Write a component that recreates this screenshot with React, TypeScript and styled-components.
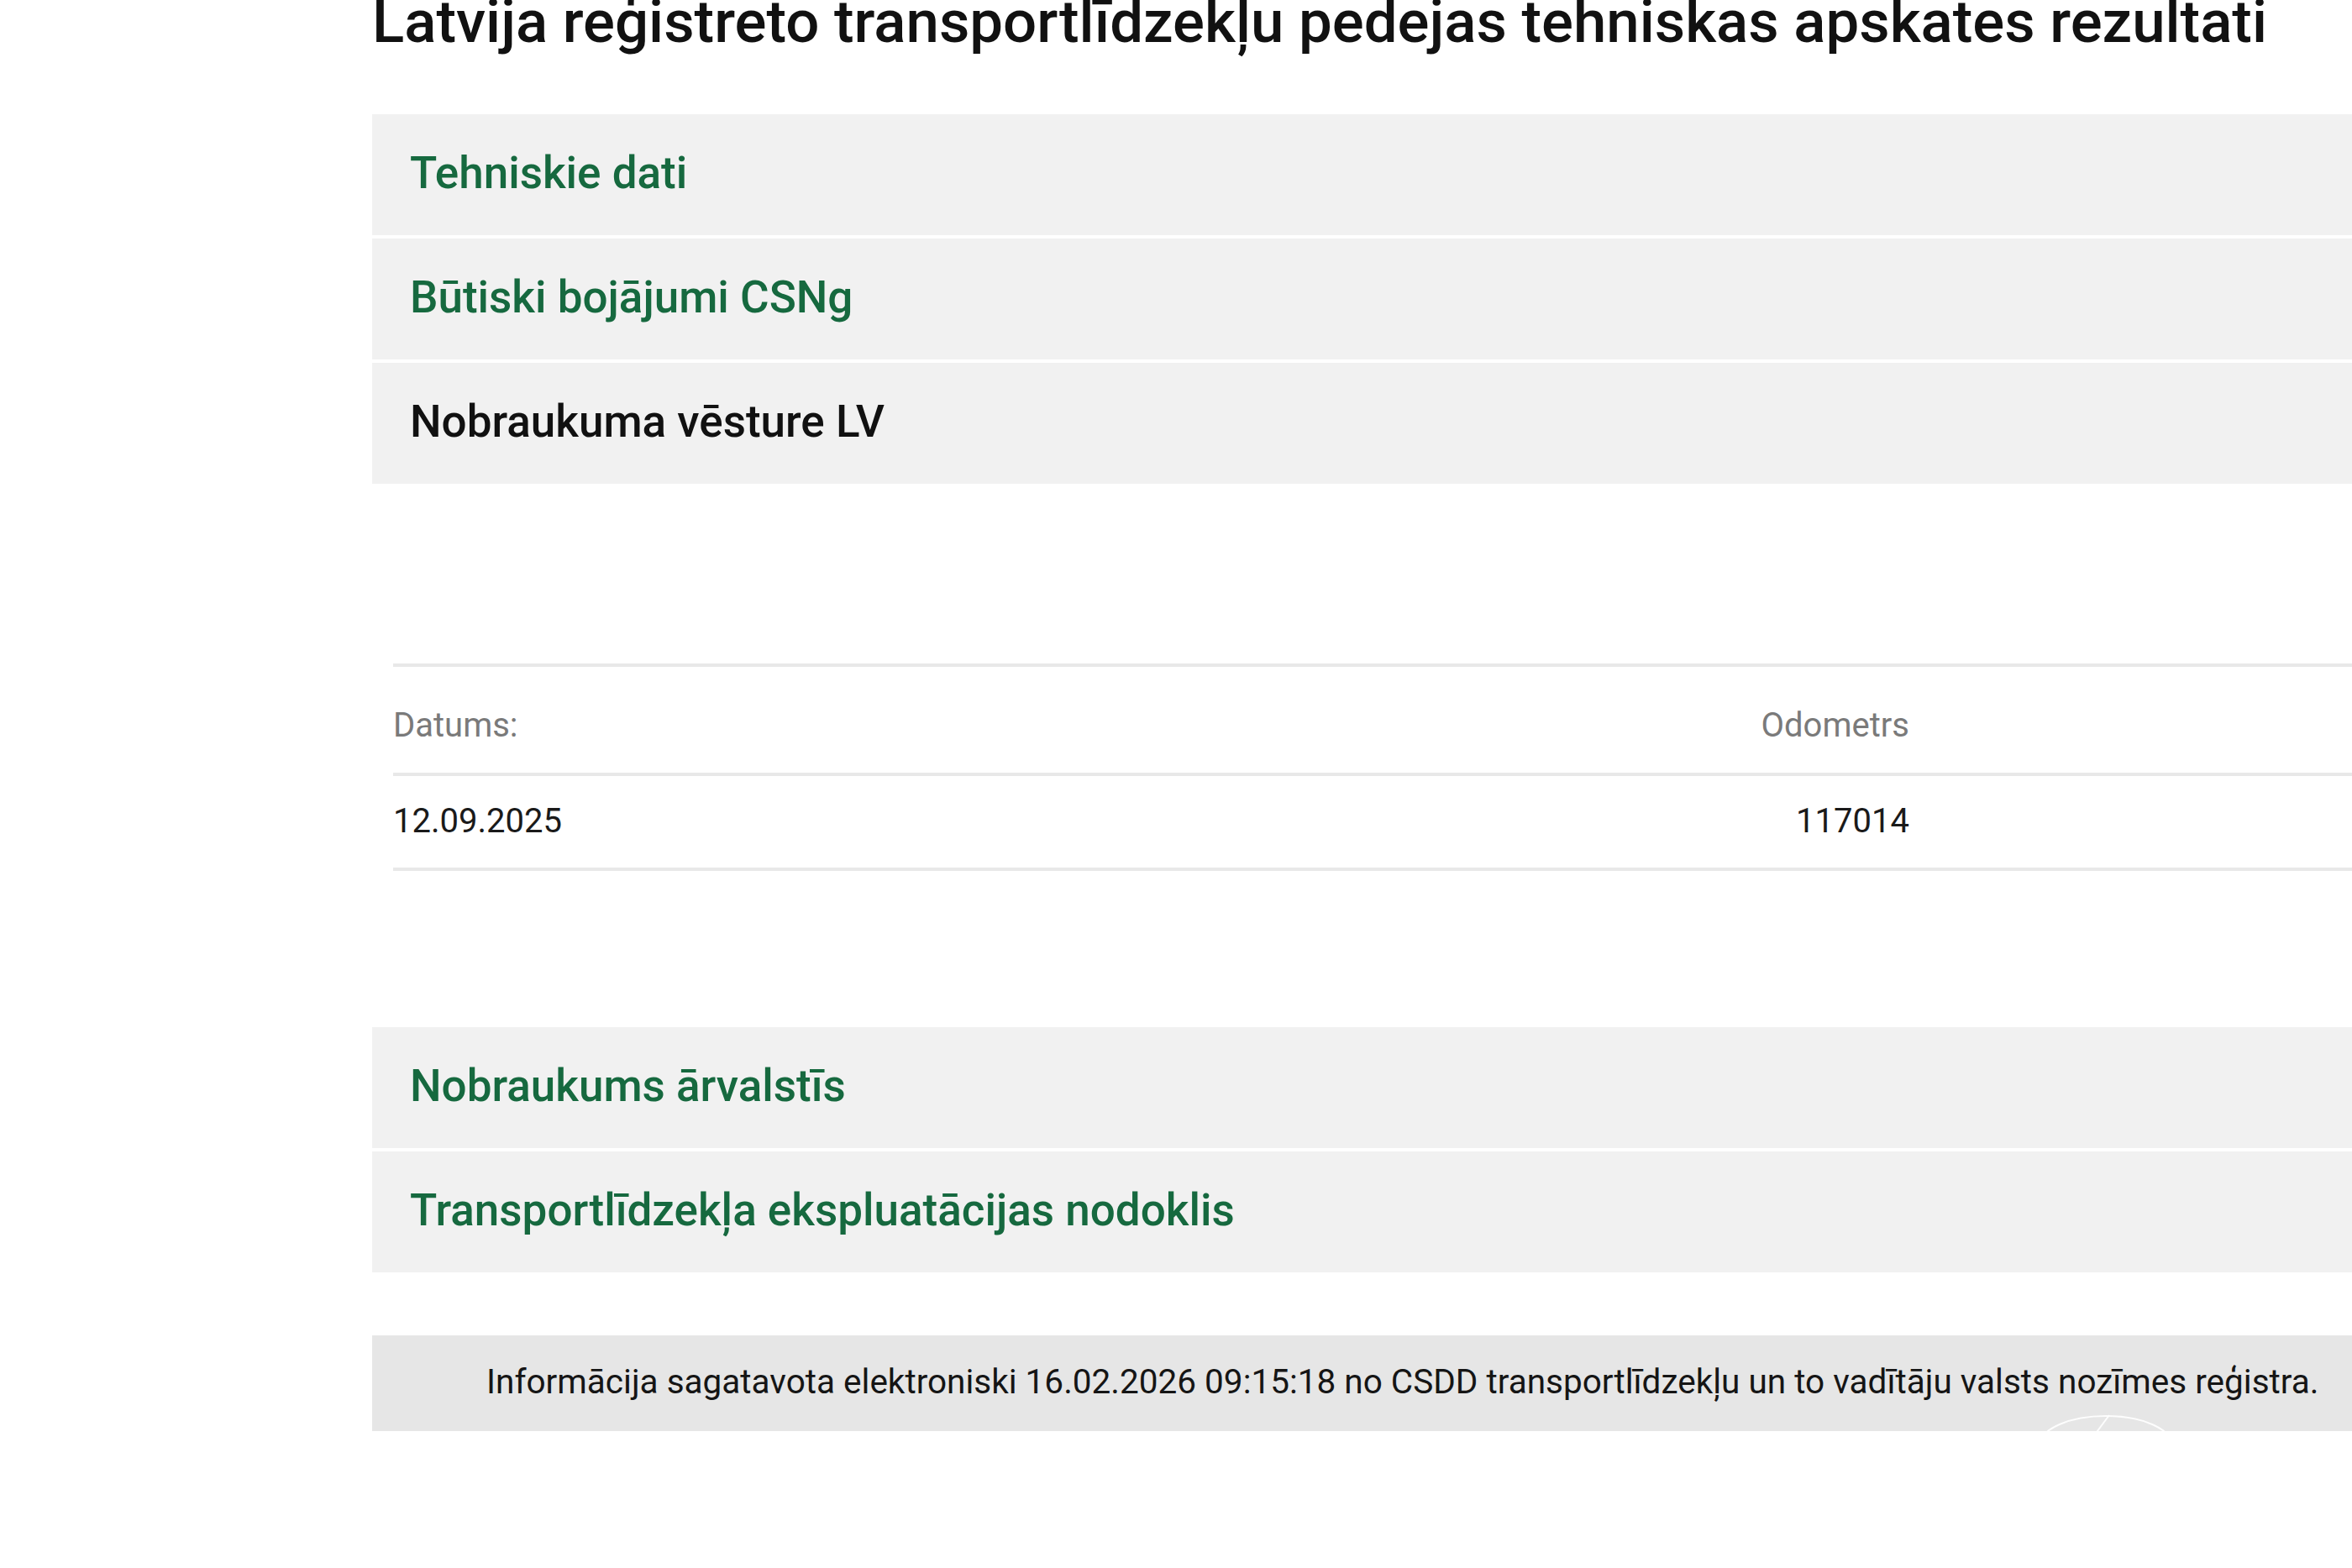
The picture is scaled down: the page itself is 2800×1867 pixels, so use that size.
import React from "react";
import styled, { createGlobalStyle } from "styled-components";

const Global = createGlobalStyle`
  html, body {
    margin: 0;
    padding: 0;
    background: #ffffff;
    overflow: hidden;
  }
  body {
    font-family: Roboto, "Liberation Sans", Arial, sans-serif;
    color: #111111;
  }
`;

const Page = styled.div`
  width: 2800px;
  overflow: hidden;
`;

const Content = styled.main`
  width: 2450px;
  margin-left: 443px;
  display: flex;
  flex-direction: column;
`;

const Title = styled.h1`
  margin: 0;
  font-family: Roboto, "Liberation Sans", Arial, sans-serif;
  font-weight: 500;
  font-size: 70.8px;
  line-height: 52px;
  color: #111111;
  white-space: nowrap;
`;

const Accordion = styled.section<{ $top: number }>`
  margin-top: ${(p) => p.$top}px;
  display: flex;
  flex-direction: column;
  gap: 4px;
`;

const AccordionHeader = styled.div<{ $active?: boolean }>`
  height: 144px;
  box-sizing: border-box;
  background: #f1f1f1;
  display: flex;
  align-items: center;
  padding: 0 0 4px 45px;
  font-size: 53px;
  font-weight: 500;
  color: ${(p) => (p.$active ? "#111111" : "#16693f")};
`;

const HistoryPanel = styled.div`
  padding: 214px 25px 0 25px;
  height: 647px;
  box-sizing: border-box;
`;

const Table = styled.div`
  display: grid;
  grid-template-columns: 1fr auto 595px;
  border-top: 4px solid #e8e8e8;
`;

const Cell = styled.div<{ $head?: boolean; $right?: boolean }>`
  height: ${(p) => (p.$head ? 130 : 113)}px;
  display: flex;
  align-items: center;
  justify-content: ${(p) => (p.$right ? "flex-end" : "flex-start")};
  border-bottom: 4px solid #e8e8e8;
  font-size: 40px;
  font-weight: 400;
  color: ${(p) => (p.$head ? "#7a7a7a" : "#1a1a1a")};
  padding-top: ${(p) => (p.$head ? 12 : 0)}px;
  padding-bottom: ${(p) => (p.$head ? 0 : 2)}px;
  box-sizing: border-box;
`;

const Footer = styled.footer`
  position: relative;
  margin-top: 75px;
  height: 114px;
  box-sizing: border-box;
  background: #e6e6e6;
  display: flex;
  align-items: center;
  padding: 0 0 4px 136px;
  font-size: 40.5px;
  color: #151515;
  overflow: hidden;
`;

const Watermark = styled.svg`
  position: absolute;
  left: 1984px;
  top: 88px;
  width: 160px;
  height: 60px;
`;

const sections1 = [
  { label: "Tehniskie dati" },
  { label: "Būtiski bojājumi CSNg" },
  { label: "Nobraukuma vēsture LV", active: true },
];

const sections2 = [
  { label: "Nobraukums ārvalstīs" },
  { label: "Transportlīdzekļa ekspluatācijas nodoklis" },
];

export default function App() {
  return (
    <Page>
      <Global />
      <Content>
        <Title>Latvija reģistreto transportlīdzekļu pedejas tehniskas apskates rezultati</Title>
        <Accordion $top={84}>
          {sections1.map((s) => (
            <AccordionHeader key={s.label} $active={s.active}>
              {s.label}
            </AccordionHeader>
          ))}
        </Accordion>
        <HistoryPanel>
          <Table>
            <Cell $head>Datums:</Cell>
            <Cell $head $right>Odometrs</Cell>
            <Cell $head />
            <Cell>12.09.2025</Cell>
            <Cell $right>117014</Cell>
            <Cell />
          </Table>
        </HistoryPanel>
        <Accordion $top={0}>
          {sections2.map((s) => (
            <AccordionHeader key={s.label}>{s.label}</AccordionHeader>
          ))}
        </Accordion>
        <Footer>
          Informācija sagatavota elektroniski 16.02.2026 09:15:18 no CSDD transportlīdzekļu un to vadītāju valsts nozīmes reģistra.
          <Watermark viewBox="0 0 160 60" fill="none">
            <ellipse cx="80" cy="42" rx="78" ry="34" stroke="#ffffff" strokeWidth="2" opacity="0.9" />
            <path d="M84 7 L58 42" stroke="#ffffff" strokeWidth="2" opacity="0.9" />
          </Watermark>
        </Footer>
      </Content>
    </Page>
  );
}
